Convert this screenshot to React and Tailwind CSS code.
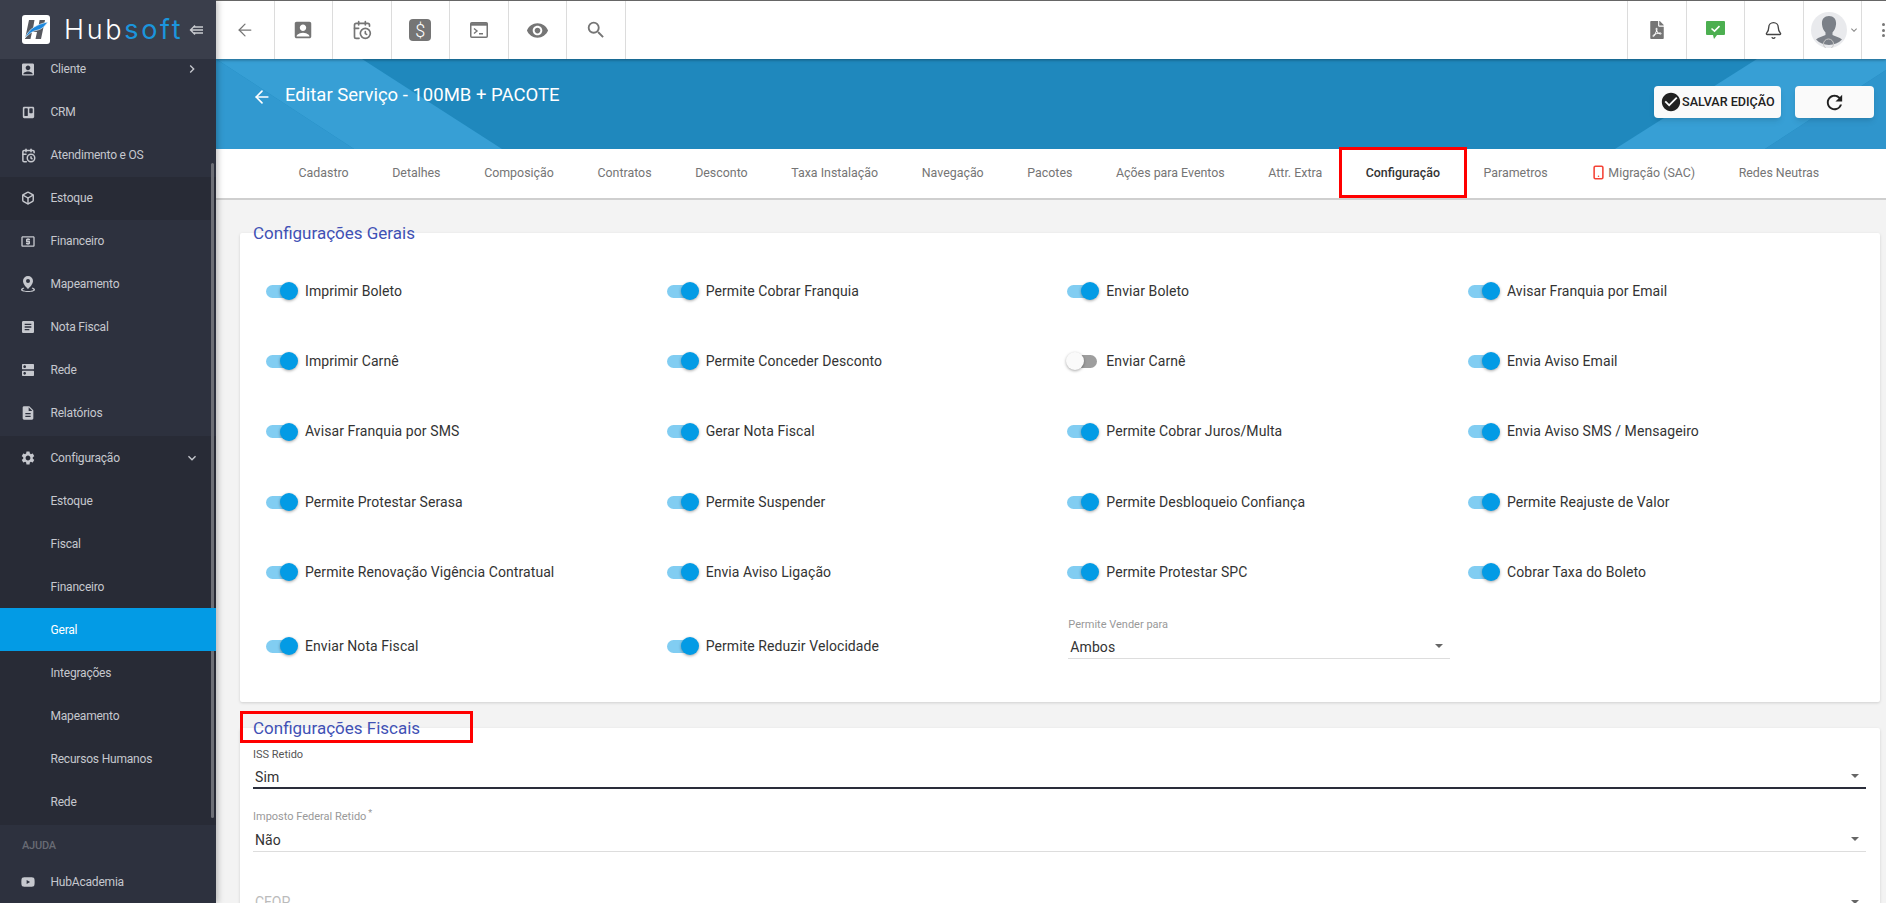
import { ArrowLeft, Bell, Box, CalendarClock, Smartphone } from 'lucide-react';
import { FaFilePdf, FaTrello, FaYoutube } from 'react-icons/fa';
import {
  MdAccountBox,
  MdArticle,
  MdCheckCircle,
  MdDescription,
  MdDns,
  MdKeyboardArrowDown,
  MdKeyboardArrowRight,
  MdLocalAtm,
  MdRefresh,
  MdSearch,
  MdSettings,
  MdVisibility,
} from 'react-icons/md';

function PinIcon() {
  return (
    <svg width="14" height="16" viewBox="0 0 14 16" fill="currentColor">
      <path d="M7 0a5 5 0 0 1 5 5c0 3-3 6-5 8-2-2-5-5-5-8a5 5 0 0 1 5-5zm0 3a2 2 0 1 0 0 4 2 2 0 0 0 0-4z" />
      <path d="M2.500 11.500C1 12 0 12.800 0 13.700 0 15 3 16 7 16s7-1 7-2.300c0-.9-1-1.700-2.500-2.200l-.8 1c1 .3 1.800.8 1.800 1.200 0 .6-2.300 1.300-5.500 1.300s-5.500-.7-5.500-1.300c0-.4.800-.9 1.800-1.200z" />
    </svg>
  );
}

const mainMenu = [
  { label: 'Cliente', icon: <MdAccountBox size={17} />, arrow: true },
  { label: 'CRM', icon: <FaTrello size={13} /> },
  { label: 'Atendimento e OS', icon: <CalendarClock size={15} strokeWidth={2.4} /> },
  { label: 'Estoque', icon: <Box size={14} strokeWidth={2.4} />, dark: true },
  { label: 'Financeiro', icon: <MdLocalAtm size={17} /> },
  { label: 'Mapeamento', icon: <PinIcon /> },
  { label: 'Nota Fiscal', icon: <MdArticle size={16} /> },
  { label: 'Rede', icon: <MdDns size={16} /> },
  { label: 'Relatórios', icon: <MdDescription size={16} /> },
];

const subMenu = ['Estoque', 'Fiscal', 'Financeiro', 'Geral', 'Integrações', 'Mapeamento', 'Recursos Humanos', 'Rede'];

const tabs = [
  'Cadastro',
  'Detalhes',
  'Composição',
  'Contratos',
  'Desconto',
  'Taxa Instalação',
  'Navegação',
  'Pacotes',
  'Ações para Eventos',
  'Attr. Extra',
  'Configuração',
  'Parametros',
  'Migração (SAC)',
  'Redes Neutras',
];

const switches = [
  ['Imprimir Boleto', 'Permite Cobrar Franquia', 'Enviar Boleto', 'Avisar Franquia por Email'],
  ['Imprimir Carnê', 'Permite Conceder Desconto', 'Enviar Carnê', 'Envia Aviso Email'],
  ['Avisar Franquia por SMS', 'Gerar Nota Fiscal', 'Permite Cobrar Juros/Multa', 'Envia Aviso SMS / Mensageiro'],
  ['Permite Protestar Serasa', 'Permite Suspender', 'Permite Desbloqueio Confiança', 'Permite Reajuste de Valor'],
  ['Permite Renovação Vigência Contratual', 'Envia Aviso Ligação', 'Permite Protestar SPC', 'Cobrar Taxa do Boleto'],
];

function MenuRow({ icon, label, arrow, dark, open }) {
  return (
    <div className={`flex h-[43px] items-center pl-[20px] pr-[16px] text-[12px] tracking-[-0.2px] text-[#c6c8ce] ${dark ? 'bg-[#282b36]' : ''}`}>
      <span className="flex w-[16px] justify-center text-[#c6c8ce]">{icon}</span>
      <span className="ml-[14.500px] flex-1">{label}</span>
      {arrow && <MdKeyboardArrowRight size={16} />}
      {open && <MdKeyboardArrowDown size={16} />}
    </div>
  );
}

function Logo() {
  return (
    <div className="flex h-[59px] shrink-0 items-center bg-[#3a3e4b] pl-[22px]">
      <svg className="shrink-0" width="28" height="29" viewBox="0 0 28 29">
        <rect width="28" height="29" rx="3" fill="#fff" />
        <path d="M7 5h5.500l-1.600 9H16l1.600-9H23l-4 19h-5.500l1.500-7h-5l-1.500 7H3z" fill="#56585f" />
        <path d="M3 23C7 13 16 9 26 7c-3 4-6 7-10 8-6 1-9 4-13 8z" fill="#1b87dd" stroke="#fff" strokeWidth="0.6" />
      </svg>
      <span className="ml-[14px] text-[27px] leading-none font-light tracking-[2.700px] whitespace-nowrap text-white [font-family:Inter,sans-serif]">
        Hub<span className="font-normal text-[#1b95dc]">soft</span>
      </span>
      <svg className="ml-[6px] shrink-0" width="15" height="12" viewBox="0 0 15 12" fill="none" stroke="#c9cbd0" strokeWidth="1.4">
        <path d="M6 1.500 1.500 6 6 10.500M2 6h12M5 3h9M5 9h9" />
      </svg>
    </div>
  );
}

function Sidebar() {
  return (
    <aside className="relative z-20 flex w-[216px] shrink-0 flex-col overflow-hidden bg-[#2d313e] shadow-[2px_0_6px_rgba(0,0,0,0.25)]">
      <Logo />
      <div className="-mt-[11.300px] flex flex-col">
        {mainMenu.map((item) => (
          <MenuRow key={item.label} {...item} />
        ))}
        <div className="mt-[1.500px] bg-[#282b36] pb-[2px]">
          <MenuRow icon={<MdSettings size={16} />} label="Configuração" open />
          {subMenu.map((label) =>
            label === 'Geral' ? (
              <div key={label} className="relative z-10 flex h-[43px] items-center bg-[#039be5] pl-[50.500px] text-[12px] tracking-[-0.2px] text-white">
                {label}
              </div>
            ) : (
              <div key={label} className="flex h-[43px] items-center pl-[50.500px] text-[12px] tracking-[-0.2px] text-[#c6c8ce]">
                {label}
              </div>
            )
          )}
        </div>
        <div className="mt-[8px] flex h-[27px] items-center pl-[22px] text-[11px] font-medium tracking-[-0.2px] text-[#686b74]">AJUDA</div>
        <MenuRow icon={<FaYoutube size={14} />} label="HubAcademia" />
      </div>
      <div className="absolute top-[163px] left-[211px] h-[655px] w-[3px] rounded-sm bg-[#6d6f76]" />
    </aside>
  );
}

function BarCell({ children }) {
  return <div className="flex w-[58.500px] shrink-0 items-center justify-center border-r border-[#dcdcdc] text-[#757575]">{children}</div>;
}

function Topbar() {
  return (
    <header className="relative z-10 flex h-[59px] shrink-0 border-t border-[#666] bg-white shadow-[0_1px_3px_rgba(0,0,0,0.35)]">
      <BarCell>
        <ArrowLeft size={20} strokeWidth={1.500} />
      </BarCell>
      <BarCell>
        <MdAccountBox size={22} />
      </BarCell>
      <BarCell>
        <CalendarClock size={20} strokeWidth={2} />
      </BarCell>
      <BarCell>
        <span className="flex h-[22px] w-[22px] items-center justify-center rounded-[4px] bg-[#757575] text-[18px] font-light text-white">$</span>
      </BarCell>
      <BarCell>
        <svg width="18" height="16" viewBox="0 0 18 16" fill="none" stroke="#757575">
          <rect x="0.75" y="0.75" width="16.500" height="14.500" rx="1" strokeWidth="1.500" />
          <path d="M1 2.400h16" strokeWidth="2.600" />
          <path d="M4 6.500 7 9l-3 2.500M9 11.800h4" strokeWidth="1.400" />
        </svg>
      </BarCell>
      <BarCell>
        <MdVisibility size={23} />
      </BarCell>
      <BarCell>
        <MdSearch size={22} />
      </BarCell>
      <div className="ml-auto flex">
        <div className="border-r border-[#dcdcdc]" />
        <BarCell>
          <FaFilePdf size={18} />
        </BarCell>
        <BarCell>
          <svg width="19" height="19" viewBox="0 0 19 19">
            <path d="M1 0h17a1 1 0 0 1 1 1v12a1 1 0 0 1-1 1H11l-3 4-1-4H1a1 1 0 0 1-1-1V1a1 1 0 0 1 1-1z" fill="#4caf50" />
            <path d="m5.500 7.500 3 2.600 5-5" fill="none" stroke="#fff" strokeWidth="1.600" />
          </svg>
        </BarCell>
        <BarCell>
          <Bell size={19} strokeWidth={1.700} className="text-[#444]" />
        </BarCell>
        <BarCell>
          <div className="flex items-center pl-[7px]">
            <svg className="shrink-0" width="36" height="36" viewBox="0 0 36 36">
              <circle cx="18" cy="18" r="18" fill="#e9eaed" />
              <path d="M18 4c5 0 7.500 3.500 7 8.500-.3 3-1.500 6-3.500 8v2.500c3 1.500 7 2 9.500 4.500a18 18 0 0 1-26 0c2.500-2.500 6.500-3 9.500-4.500V20.500c-2-2-3.200-5-3.500-8C10.500 7.500 13 4 18 4z" fill="#7b8088" />
              <circle cx="17.500" cy="32" r="5" fill="none" stroke="#c6c6c6" strokeWidth="1" />
            </svg>
            <MdKeyboardArrowDown size={12} className="ml-[1px] shrink-0 text-[#888]" />
          </div>
        </BarCell>
        <div className="flex w-[24px] flex-col items-end justify-center gap-[2.500px] pr-[1px]">
          <span className="h-[3px] w-[3px] rounded-full bg-[#777]" />
          <span className="h-[3px] w-[3px] rounded-full bg-[#777]" />
          <span className="h-[3px] w-[3px] rounded-full bg-[#777]" />
        </div>
      </div>
    </header>
  );
}

function PageHeader() {
  return (
    <div className="relative h-[90px] shrink-0 overflow-hidden bg-[#1f88bd]">
      <svg className="absolute inset-0" width="1670" height="90" viewBox="0 0 1670 90">
        <path d="M0 0h146l140 90H138z" fill="#379fd5" />
        <path d="M0 0l138 90H0z" fill="#3199d0" />
        <path d="M1541 0l-142 90h150L1670 11V0z" fill="#379fd5" />
        <path d="M1670 11l-121 79h121z" fill="#2f95cc" />
      </svg>
      <div className="relative flex items-start">
        <ArrowLeft size={20} strokeWidth={2} className="mt-[28px] ml-[36px] text-white" />
        <h1 className="mt-[24px] ml-[13px] text-[18.500px] leading-[24px] font-normal text-white">Editar Serviço - 100MB + PACOTE</h1>
        <div className="mt-[27px] mr-[12px] ml-auto flex gap-[14px]">
          <button className="flex h-[32px] w-[127px] items-center rounded-[4px] bg-[#fafafa] pl-[6px] text-[12.600px] font-medium text-[#212121] shadow-md">
            <MdCheckCircle size={22} />
            <span className="whitespace-nowrap">SALVAR EDIÇÃO</span>
          </button>
          <button className="flex h-[32px] w-[79px] items-center justify-center rounded-[4px] bg-[#fafafa] text-[#212121] shadow-md">
            <MdRefresh size={23} />
          </button>
        </div>
      </div>
    </div>
  );
}

function Tabs() {
  return (
    <nav className="flex h-[51px] shrink-0 items-center border-b-2 border-[#cfcfcf] bg-white pb-[1px] pl-[60.700px] text-[12.400px] text-[#757575]">
      {tabs.map((tab) => (
        <div key={tab} className={`relative flex items-center px-[21.800px] whitespace-nowrap ${tab === 'Configuração' ? 'font-medium text-[#333]' : ''}`}>
          {tab === 'Migração (SAC)' && <Smartphone size={15} strokeWidth={2.500} className="mr-[2px] text-[#f44336]" />}
          {tab}
          {tab === 'Configuração' && <span className="absolute -top-[17px] -right-[5px] -bottom-[16px] -left-[5px] border-[3px] border-[#f00]" />}
        </div>
      ))}
    </nav>
  );
}

function Toggle({ off }) {
  return (
    <span className={`relative block h-[13px] w-[30px] shrink-0 rounded-full ${off ? 'bg-[#9e9e9e]' : 'bg-[#81cdf2]'}`}>
      <span
        className={`absolute -top-[2.500px] h-[18px] w-[18px] rounded-full shadow-[0_1px_3px_rgba(0,0,0,0.35)] ${
          off ? '-left-[1px] bg-[#fafafa]' : 'left-[14px] bg-[#039be5]'
        }`}
      />
    </span>
  );
}

function SwitchItem({ label }) {
  return (
    <div className="flex items-center gap-[9px] text-[14px] tracking-[0.08px] text-[#333]">
      <Toggle off={label === 'Enviar Carnê'} />
      <span className="whitespace-nowrap">{label}</span>
    </div>
  );
}

function Caret({ className }) {
  return <span className={`h-0 w-0 border-x-[4px] border-t-[4px] border-x-transparent border-t-[#666] ${className || ''}`} />;
}

function SelectField({ label, value, required, focused }) {
  return (
    <div>
      <div className={`h-[13px] text-[11px] leading-[13px] ${focused ? 'text-[#555]' : 'text-[#999]'}`}>
        {label}
        {required && <sup className="ml-[2px] text-[9px]">*</sup>}
      </div>
      <div className={`mt-[6.500px] flex h-[22px] items-start justify-between pl-[2px] text-[14px] leading-[20px] tracking-[0.08px] text-[#333] ${focused ? 'border-b-2 border-[#2a2d3a]' : 'border-b border-[#ddd]'}`}>
        {value}
        <Caret className="mt-[7px] mr-[7px]" />
      </div>
    </div>
  );
}

function Content() {
  return (
    <div className="flex-1 overflow-hidden bg-[#f3f3f3] pt-[33px] pr-[6px] pl-[24px]">
      <section className="flow-root h-[469px] rounded-[2px] bg-white shadow-[0_1px_3px_rgba(0,0,0,0.15)]">
        <h2 className="-mt-[10px] pl-[13px] text-[17px] leading-[20px] font-normal text-[#3f51b5]">Configurações Gerais</h2>
        <div className="mt-[13px] pl-[26px]">
          {switches.map((row) => (
            <div key={row[0]} className="grid h-[70.330px] grid-cols-[400.670px_400.670px_400.670px_400.670px] items-center">
              {row.map((label) => (
                <SwitchItem key={label} label={label} />
              ))}
            </div>
          ))}
          <div className="grid h-[77px] grid-cols-[400.670px_400.670px_400.670px_400.670px] items-center">
            <SwitchItem label="Enviar Nota Fiscal" />
            <SwitchItem label="Permite Reduzir Velocidade" />
            <div className="mt-[10px] w-[383px] self-start pl-[1px]">
              <SelectField label="Permite Vender para" value="Ambos" />
            </div>
          </div>
        </div>
      </section>
      <section className="mt-[26px] flow-root h-[200px] rounded-[2px] bg-white pr-[14px] pl-[13px] shadow-[0_1px_3px_rgba(0,0,0,0.15)]">
        <h2 className="relative -mt-[10px] text-[17px] leading-[20px] font-normal text-[#3f51b5]">
          Configurações Fiscais
          <span className="absolute -top-[7px] -left-[13px] h-[32px] w-[233px] border-[3px] border-[#f00]" />
        </h2>
        <div className="mt-[9.500px]">
          <SelectField label="ISS Retido" value="Sim" focused />
        </div>
        <div className="mt-[21px]">
          <SelectField label="Imposto Federal Retido" value="Não" required />
        </div>
        <div className="mt-[40px] flex items-center justify-between pl-[2px] text-[14px] leading-[20px] text-[#bbb]">
          CFOP
          <Caret className="mr-[7px]" />
        </div>
      </section>
    </div>
  );
}

export default function App() {
  return (
    <div className="flex h-screen overflow-hidden bg-[#f3f3f3] [font-family:Roboto,sans-serif]">
      <Sidebar />
      <main className="flex min-w-0 flex-1 flex-col">
        <Topbar />
        <PageHeader />
        <Tabs />
        <Content />
      </main>
    </div>
  );
}
